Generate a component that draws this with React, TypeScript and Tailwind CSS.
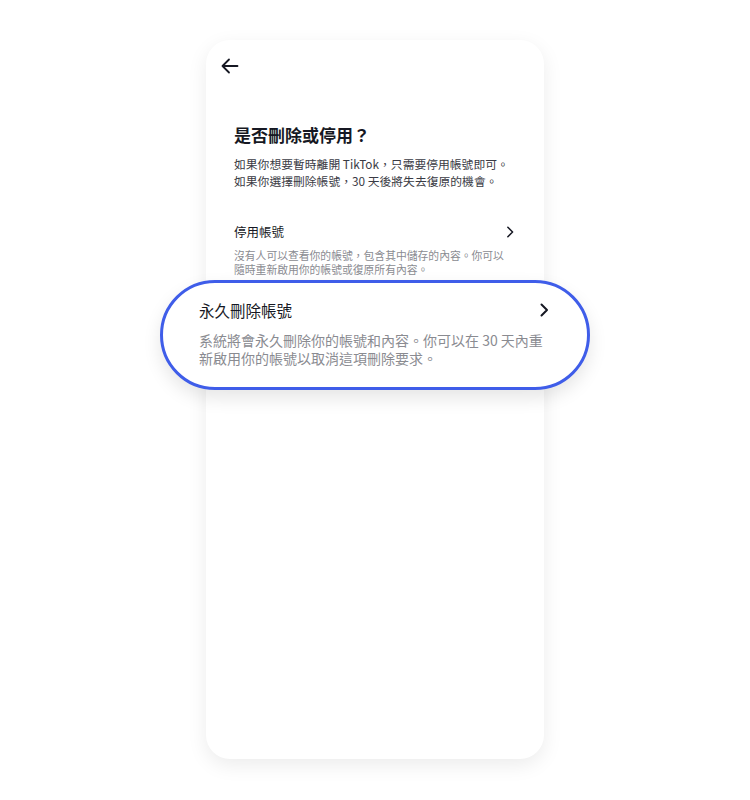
const font = { fontFamily: '"Noto Sans CJK TC", "Noto Sans", sans-serif' }

function Chevron({ size = 14, stroke = 2 }: { size?: number; stroke?: number }) {
  return (
    <svg width={size} height={size} viewBox="0 0 14 14" fill="none" stroke="#161823" strokeWidth={stroke} strokeLinecap="round" strokeLinejoin="round">
      <path d="M4.5 1.5 10 7l-5.5 5.5" />
    </svg>
  )
}

export default function App() {
  return (
    <div className="min-h-[800px] w-full bg-white pt-[40px]" style={font}>
      <div className="mx-auto flex h-[719px] w-[338px] flex-col rounded-[24px] bg-white px-[28px] pt-[18px] shadow-[0_6px_20px_rgba(0,0,0,0.08)]">
        {/* back */}
        <div className="-ml-[13px] h-[16px]">
          <svg width="18" height="16" viewBox="0 0 18 16" fill="none" stroke="#161823" strokeWidth="1.8" strokeLinecap="round" strokeLinejoin="round">
            <path d="M16.5 8H1.5M8 1.5 1.5 8 8 14.5" />
          </svg>
        </div>

        <h1 className="mt-[49px] text-[17px] font-bold leading-[24px] text-[#161823]">是否刪除或停用？</h1>
        <p className="mt-[8px] whitespace-nowrap text-[11.8px] leading-[17px] text-[#3a3b44]">
          如果你想要暫時離開 TikTok，只需要停用帳號即可。
          <br />
          如果你選擇刪除帳號，30 天後將失去復原的機會。
        </p>

        {/* deactivate */}
        <div className="mt-[34px] flex items-center justify-between">
          <span className="text-[12.5px] leading-[18px] text-[#161823]">停用帳號</span>
          <Chevron size={12} stroke={1.8} />
        </div>
        <p className="mt-[7px] whitespace-nowrap text-[10.8px] leading-[14px] text-[#8a8b91]">
          沒有人可以查看你的帳號，包含其中儲存的內容。你可以
          <br />
          隨時重新啟用你的帳號或復原所有內容。
        </p>

        {/* delete, highlighted */}
        <div className="relative -mx-[74px] mt-[4px] rounded-full border-[3px] border-[#3f5de9] bg-white pb-[20px] pl-[36px] pr-[36px] pt-[16px] shadow-[0_8px_18px_rgba(0,0,0,0.10)]">
          <div className="flex items-center justify-between">
            <span className="text-[15.5px] leading-[22px] text-[#161823]">永久刪除帳號</span>
            <Chevron size={14} stroke={2} />
          </div>
          <p className="mt-[10px] whitespace-nowrap text-[14px] leading-[18px] text-[#8a8b91]">
            系統將會永久刪除你的帳號和內容。你可以在 30 天內重
            <br />
            新啟用你的帳號以取消這項刪除要求。
          </p>
        </div>
      </div>
    </div>
  )
}
